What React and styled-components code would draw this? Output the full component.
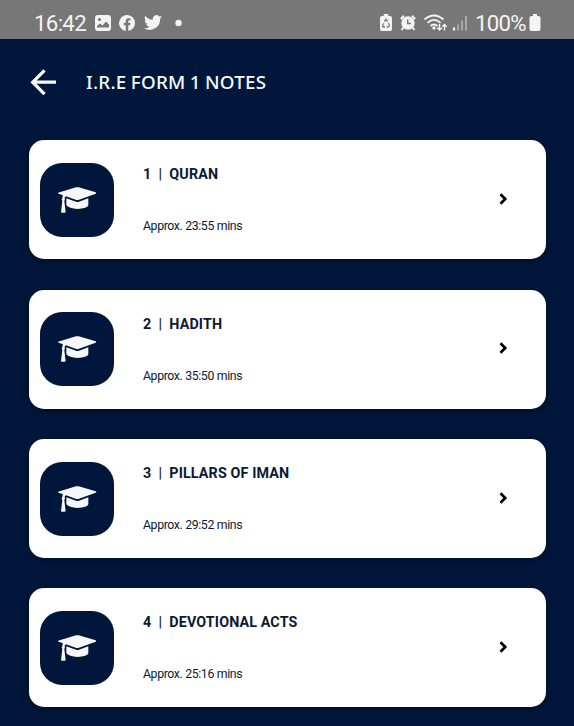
import styled, { createGlobalStyle } from 'styled-components';


const GlobalStyle = createGlobalStyle`
  body {
    margin: 0;
    background: #00163a;
    overflow: hidden;
  }
`;

const Screen = styled.div`
  height: 726px;
  overflow: hidden;
  background: #00163a;
  font-family: Roboto, sans-serif;
`;

const StatusBar = styled.div`
  box-sizing: border-box;
  height: 39px;
  padding: 6px 33px 0 34px;
  display: flex;
  justify-content: space-between;
  background: #777777;
  color: #f4f4f4;
`;

const StatusGroup = styled.div`
  height: 33px;
  display: flex;
  align-items: center;
  gap: ${props => props.$gap};
`;

const StatusText = styled.span`
  font-size: 22.3px;
  line-height: 32px;
  letter-spacing: ${props => props.$spacing || '0'};
  white-space: nowrap;
`;

const Glyph = styled.svg`
  display: block;
  flex: none;
`;

const Chevron = styled(Glyph)`
  margin-bottom: 1.5px;
`;

const Header = styled.header`
  height: 101px;
  box-sizing: border-box;
  padding: 29px 0 0 30px;
  display: flex;
  align-items: flex-start;
  gap: 29px;
`;

const Title = styled.h1`
  margin: 0;
  font-family: "Noto Sans", sans-serif;
  font-size: 18.8px;
  font-weight: 500;
  line-height: 28px;
  letter-spacing: 0.28px;
  word-spacing: -1px;
  color: #f6fafd;
  white-space: nowrap;
`;

const List = styled.div`
  padding: 0.3px 28.5px 0 29px;
  display: flex;
  flex-direction: column;
  gap: 30.4px;
`;

const Card = styled.div`
  height: 119px;
  box-sizing: border-box;
  padding: 0 38px 0 11px;
  display: flex;
  align-items: center;
  border-radius: 15px;
  background: #fff;
  box-shadow: 0 2px 7px rgba(0, 0, 0, 0.35);
`;

const Tile = styled.div`
  width: 74px;
  height: 74px;
  border-radius: 22px;
  display: flex;
  align-items: center;
  justify-content: center;
  background: #00163a;
`;

const Details = styled.div`
  height: 119px;
  margin-left: 29px;
  flex: 1;
  display: flex;
  flex-direction: column;
  color: #0b1a33;
`;

const Subject = styled.div`
  margin-top: 24px;
  display: flex;
  font-size: 14.3px;
  font-weight: 700;
  line-height: 20px;
  letter-spacing: 0.13px;
`;

const Divider = styled.span`
  width: 18px;
  text-align: center;
  font-weight: 500;
`;

const Duration = styled.div`
  margin-top: 32px;
  font-size: 12.3px;
  line-height: 20px;
  letter-spacing: -0.4px;
  word-spacing: 0.3px;
`;

const notes = [
  { name: 'QURAN', time: '23:55' },
  { name: 'HADITH', time: '35:50' },
  { name: 'PILLARS OF IMAN', time: '29:52' },
  { name: 'DEVOTIONAL ACTS', time: '25:16' },
]

function GraduationCap() {
  return (
    <Glyph width="40" height="28" viewBox="0 0 120 84" fill="#f5f7fa">
      <path d="M3 21Q4 20 8 19L57 4Q61 3 65 4L116 19Q120 21 116 23L66 41Q61 43 56 41L27 31Q23 32 23 37Q25 41 22 45L26 79Q18 82 12 79L16 45Q12 41 16 37Q16 31 18 28L5 23Q3 22 3 21Z" />
      <path d="M28 37L57 47Q61 49 66 47L94 37V58Q91 68 61 69Q37 68 28 58Z" />
    </Glyph>
  )
}

function BackArrow() {
  return (
    <Glyph width="27" height="29" viewBox="0 0 27 29" fill="none" stroke="#f6fafd" strokeWidth="3.2">
      <path d="M14.5 2.3L2.7 14.2L14.5 26.1M2.7 14.2H26" />
    </Glyph>
  )
}

function LeftStatus() {
  return (
    <StatusGroup $gap="8.5px">
      <StatusText $spacing="-0.7px">16:42</StatusText>
      <Glyph width="16" height="16" viewBox="0 0 16 16" fill="#f4f4f4">
        <path fillRule="evenodd" d="M3 0H13Q16 0 16 3V13Q16 16 13 16H3Q0 16 0 13V3Q0 0 3 0ZM2 12.5H14V9.5L11 6.5L7.5 10.5L5 8.5L2 11ZM4.5 3A1.5 1.5 0 1 0 4.5 6A1.5 1.5 0 1 0 4.5 3Z" />
      </Glyph>
      <Glyph width="16" height="16" viewBox="0 0 24 24" fill="#f4f4f4">
        <path d="M24 12A12 12 0 1 0 10.1 23.9V15.5H7.1V12H10.1V9.4Q10.1 4.7 14.6 4.7L17.3 4.9V7.9H15.8Q13.9 7.9 13.9 9.8V12H17.2L16.7 15.5H13.9V23.9A12 12 0 0 0 24 12Z" />
      </Glyph>
      <Glyph width="18" height="17" viewBox="0 1 24 22" fill="#f4f4f4">
        <path d="M24 4.6a10 10 0 0 1-2.8.8 5 5 0 0 0 2.1-2.7 10 10 0 0 1-3.1 1.2 4.9 4.9 0 0 0-8.4 4.5A14 14 0 0 1 1.7 3.2 4.9 4.9 0 0 0 3.2 9.7 5 5 0 0 1 1 9.1a4.9 4.9 0 0 0 3.9 4.9 5 5 0 0 1-2.2.1 4.9 4.9 0 0 0 4.6 3.4A10 10 0 0 1 0 19.5 14 14 0 0 0 21.5 7.1 10 10 0 0 0 24 4.6Z" />
      </Glyph>
      <Glyph width="18" height="16" viewBox="0 0 18 16" fill="#f4f4f4">
        <circle cx="8.5" cy="8" r="3.2" />
      </Glyph>
    </StatusGroup>
  )
}

function RightStatus() {
  return (
    <StatusGroup $gap="8px">
      <Glyph width="12" height="17" viewBox="0 0 13 17" preserveAspectRatio="none">
        <path fill="#f4f4f4" d="M4 0H9V2H11Q13 2 13 4V15Q13 17 11 17H2Q0 17 0 15V4Q0 2 2 2H4Z" />
        <path fill="none" stroke="#777" strokeWidth="1.3" d="M4.8 7.5L6.5 5.3L8.2 7.5M9.2 9L10.2 11.6Q10.2 13 8.2 13H7.3M5.4 13H4Q2.3 13 3 11.3L4 9.4" />
      </Glyph>
      <Glyph width="16" height="16" viewBox="0 0 16 16">
        <circle cx="8" cy="8" r="6.7" fill="#f4f4f4" />
        <path fill="none" stroke="#f4f4f4" strokeWidth="2" d="M.8 4L4 .8M12 .8L15.2 4M3.5 12.5L1.5 15M12.5 12.5L14.5 15" />
        <path fill="none" stroke="#777" strokeWidth="1.4" d="M7.7 4.3V8.5H11" />
      </Glyph>
      <Glyph width="43" height="18" viewBox="0 0 43 18" fill="none" stroke="#f4f4f4" strokeWidth="1.8">
        <path d="M.5 5.5Q10 -2.5 19.5 5.5M3.5 8.8Q10 3 16.5 8.8M6.5 12Q10 9 13.5 12" />
        <circle cx="10" cy="14" r="1.7" fill="#f4f4f4" stroke="none" />
        <path strokeWidth="1.4" d="M15.5 10V16M13.3 13.7L15.5 16L17.7 13.7M20.5 16.5V10.5M18.3 12.8L20.5 10.5L22.7 12.8" />
        <path strokeWidth="2.2" d="M30 13.5V16.5" />
        <path stroke="#a8a8a8" strokeWidth="2" d="M34 10.5V16.5M38 6.5V16.5M42 2V16.5" />
      </Glyph>
      <StatusGroup $gap="3px">
        <StatusText $spacing="-0.7px">100%</StatusText>
        <Glyph width="12" height="17" viewBox="0 0 12 17" fill="#f4f4f4">
          <path d="M4 0H8V2H9.5Q11.5 2 11.5 4V15Q11.5 17 9.5 17H2.5Q.5 17 .5 15V4Q.5 2 2.5 2H4Z" />
        </Glyph>
      </StatusGroup>
    </StatusGroup>
  )
}


export default function App() {


  return (
    <Screen>
      <GlobalStyle />
      <StatusBar>
        <LeftStatus />
        <RightStatus />
      </StatusBar>

      <Header>
        <BackArrow />
        <Title>I.R.E FORM 1 NOTES</Title>
      </Header>

      <List>
        {
          notes.map((note, index) => (
          <Card key={note.name}>
            <Tile>
              <GraduationCap />
            </Tile>
            <Details>
              <Subject>
                <span>{index + 1}</span>
                <Divider>|</Divider>
                <span>{note.name}</span>
              </Subject>
              <Duration>Approx. {note.time} mins</Duration>
            </Details>
            <Chevron width="9" height="12" viewBox="0 0 9 12" fill="none" stroke="#000" strokeWidth="2.7">
              <path d="M1.5 1.3L6.2 6L1.5 10.7" />
            </Chevron>
          </Card>
        ))}
      </List>
    </Screen>
  )
}
